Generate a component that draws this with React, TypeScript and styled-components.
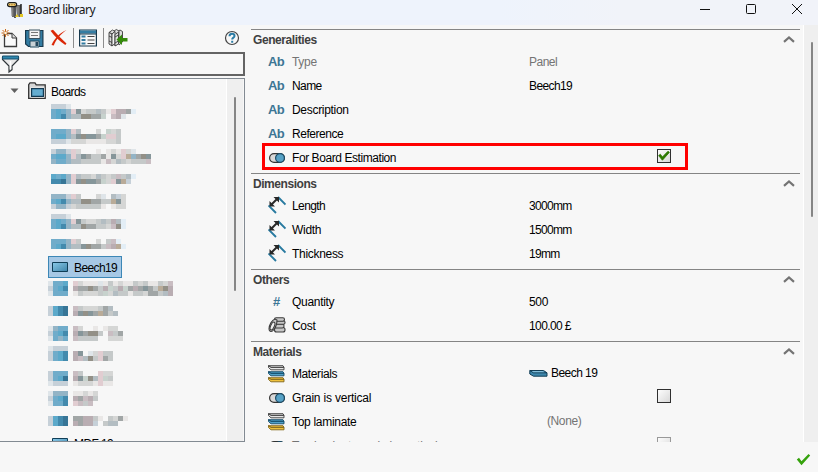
import React from "react";
import styled, { createGlobalStyle } from "styled-components";

const GlobalStyle = createGlobalStyle`
  * { box-sizing: border-box; }
  body { margin: 0; background: #f7f7f7; overflow: hidden; }
  svg { display: block; flex: none; }
`;

const Window = styled.div`
  display: flex;
  flex-direction: column;
  width: 818px;
  height: 472px;
  overflow: hidden;
  background: #f7f7f7;
  color: #000;
  font: 12px/24px "Liberation Sans", Arial, sans-serif;
  white-space: nowrap;
`;

const TitleBar = styled.header`
  display: flex;
  flex: none;
  height: 25px;
  padding: 1px 15px 0 7px;
  background: linear-gradient(90deg, #eef3fc 0 500px, #f1f3f9 620px);
`;

const Title = styled.h1`
  flex: 1;
  margin: 0 0 0 5px;
  font: 400 12px/18px "Noto Sans", "Open Sans", sans-serif;
  letter-spacing: -0.45px;
  color: #161616;
`;

const WindowButtons = styled.div`
  display: flex;
  gap: 34px;
  padding-top: 2px;
`;

const Content = styled.div`
  display: flex;
  flex: none;
  height: 417px;
`;

const Sidebar = styled.aside`
  display: flex;
  flex-direction: column;
  width: 245px;
  flex: none;
`;

const Toolbar = styled.div`
  display: flex;
  align-items: center;
  height: 27px;
  padding: 0 3px 1px 0;
`;

const ToolButton = styled.span<{ $gap?: number }>`
  margin-right: ${(p) => p.$gap ?? 4}px;
`;

const Separator = styled.span<{ $gap: number }>`
  width: 1px;
  height: 20px;
  margin-right: ${(p) => p.$gap}px;
  background: #8d8d8d;
`;

const Spacer = styled.span`
  flex: 1;
`;

const FilterBox = styled.div`
  height: 24px;
  border: 2px solid #646464;
  border-left: 0;
  padding: 0 0 0 1px;
  margin-bottom: 2px;
`;

const TreePanel = styled.div`
  display: flex;
  height: 364px;
  border: solid #828a92;
  border-width: 1px 1px 1px 0;
  overflow: hidden;
`;

const Tree = styled.div`
  flex: 1;
  padding-top: 1px;
`;

const TreeRoot = styled.div`
  display: flex;
  align-items: center;
  height: 22px;
  padding: 0 0 0 10px;
  line-height: 22px;
`;

const TreeText = styled.span`
  padding-top: 2px;
  letter-spacing: -0.6px;
`;

const TreeItem = styled.div`
  height: 22px;
  padding-left: 48px;
`;

const ItemBox = styled.div<{ $selected?: boolean }>`
  display: inline-flex;
  align-items: center;
  vertical-align: top;
  gap: 5px;
  width: 74px;
  height: 22px;
  padding: 0 0 0 3px;
  line-height: 22px;
  border: 1px solid ${(p) => (p.$selected ? "#3c87b6" : "transparent")};
  background: ${(p) => (p.$selected ? "#a6c8e5" : "transparent")};
`;

const Track = styled.div<{ $wide?: boolean }>`
  flex: none;
  width: ${(p) => (p.$wide ? 15 : 17)}px;
  margin-right: ${(p) => (p.$wide ? 0 : 1)}px;
  border-left: 1px solid #fff;
  background: #efefef;
  padding: ${(p) => (p.$wide ? "17px 0 0 7px" : "18px 0 0 7px")};
`;

const Thumb = styled.div<{ $length: number }>`
  width: 2px;
  height: ${(p) => p.$length}px;
  border-radius: 1px;
  background: #858585;
`;

const Properties = styled.main`
  flex: 1;
  padding: 4px 3px 0 6px;
  overflow: hidden;
`;

const Section = styled.section`
  border-top: 1px solid #858585;
  padding-bottom: 3px;
`;

const SectionHeader = styled.div`
  display: flex;
  justify-content: space-between;
  height: 20px;
  padding: 0 5px 0 2px;
`;

const SectionTitle = styled.h2<{ $tracking: number }>`
  margin: 0;
  font: bold 12px/21px "Liberation Sans", Arial, sans-serif;
  letter-spacing: ${(p) => p.$tracking}px;
  color: #404040;
`;

const ChevronBox = styled.span`
  padding-top: 6px;
`;

const Row = styled.div`
  display: flex;
  position: relative;
  height: 24px;
  padding-left: 17px;
`;

const RowIcon = styled.span<{ $raised?: boolean }>`
  display: flex;
  align-items: center;
  width: 18px;
  height: ${(p) => (p.$raised ? 22 : 24)}px;
  margin-right: 6px;
`;

const Label = styled.span<{ $muted?: boolean }>`
  width: 237px;
  color: ${(p) => (p.$muted ? "#747474" : "#000")};
`;

const Text = styled.span<{ $tracking?: number }>`
  letter-spacing: ${(p) => p.$tracking ?? -0.3}px;
`;

const Value = styled.span<{ $muted?: boolean; $indent?: number; $raised?: boolean }>`
  display: flex;
  align-items: center;
  gap: 3px;
  height: ${(p) => (p.$raised ? 22 : 24)}px;
  padding-left: ${(p) => p.$indent ?? 0}px;
  color: ${(p) => (p.$muted ? "#747474" : "#000")};
`;

const CheckBox = styled.span<{ $faded?: boolean }>`
  width: 14px;
  height: 14px;
  margin: 3px 0 0 128px;
  border: 1px solid ${(p) => (p.$faded ? "#999" : "#303030")};
  background: linear-gradient(135deg, #fdfdfd, #d8d8d8);
`;

const Highlight = styled.div`
  position: absolute;
  left: 11px;
  top: -3px;
  width: 426px;
  height: 27px;
  border: 3px solid #f00;
`;

const Prefix = styled.span<{ $hash?: boolean }>`
  width: 18px;
  padding-left: ${(p) => (p.$hash ? 5 : 0)}px;
  font-weight: bold;
  font-size: 13px;
  letter-spacing: -0.7px;
  color: #3d7695;
`;

const Footer = styled.footer`
  display: flex;
  justify-content: flex-end;
  height: 30px;
  padding: 11px 7px 0;
`;

/* Anonymised tree labels: mosaic cells of 5px, one palette letter per cell. */
const palette: Record<string, string> = {
  a: "#70acca", b: "#5ca9ca", c: "#438aad", d: "#377596", e: "#93b4c6",
  f: "#c6d0d8", g: "#dfe5e9", h: "#e1cdd1", i: "#b3bdc2", j: "#86969a",
  k: "#939087", l: "#a1a6a6", m: "#c5c9c9", n: "#d5d6d5", o: "#e9e7e6",
  p: "#c7d2cd", q: "#b9adb2", r: "#b9ab98", s: "#e3eef6", t: "#c9bdc2",
};

type Mosaic = { left: number; top: number; rows: string[] };

const mosaics: (Mosaic | null)[] = [
  { left: 3, top: 2, rows: ["fffg", "abaehjnmmimohqqls", "abceiikkllp tqg"] },
  { left: 3, top: 5, rows: ["aaaehi   n pnm", "abbeijkjjlphhm", "fffgnnnoooonnm"] },
  { left: 3, top: 3, rows: ["feefhn   o onohng", "abbehijlmmlojnhrelkj", "eaaeiimmmmotnimnmmmt"] },
  { left: 3, top: 6, rows: ["babehimmnimnmtmis", "ccdehjkjjlpnhjrf"] },
  { left: 3, top: 4, rows: ["eeefhm   ng ifn", "abceiikkllmmrjn", "feefnmmmmmo onn"] },
  { left: 3, top: 2, rows: ["fffg", "abaehjmnnmimqis", "abceiikllmmntks"] },
  { left: 3, top: 5, rows: ["aaaehm   n mts", "abceiijkllmtqrs"] },
  null,
  { left: 0, top: 3, rows: ["gaab hnooogomonoomnmoomnt", "fabc qllklmqpmqplqljlmrkq", "gaaa omnnnmpnimmommnllmiq"] },
  { left: 0, top: 6, rows: ["fbcd tmnnnmli", "fbcd qjkjlrlmi"] },
  { left: 0, top: 4, rows: ["geaa tn  o onn", "fabc qjlkkm tml", "gaea tmmmm  nnn"] },
  { left: 0, top: 2, rows: ["gfff", "fabc qj gnhmm", "fabc qtikmhlm"] },
  { left: 0, top: 5, rows: ["faaa tm   hnn", "fabd qjpkihpm", "gfff onnnohoo"] },
  { left: 0, top: 3, rows: ["geee oonon", "fabc qltqm", "gaac htmt"] },
  { left: 0, top: 6, rows: ["fbcd llqqmo mnlo", "fbcd qlqqf mii"] },
];

function MosaicLabel({ left, top, rows }: Mosaic) {
  return (
    <svg width="150" height="22" shapeRendering="crispEdges">
      {rows.map((row, y) =>
        [...row].map((cell, x) =>
          palette[cell] ? (
            <rect key={`${x}-${y}`} x={left + x * 5} y={top + y * 5} width="5" height="5" fill={palette[cell]} />
          ) : null
        )
      )}
    </svg>
  );
}

const AppIcon = () => (
  <svg width="16" height="18" viewBox="0 0 16 18">
    <path d="M4 5h3v11H5zM9 4h5v12h-4z" fill="#666" />
    <path d="M5 6v9M11 5v11" stroke="#999" />
    <path d="M8 5v12M14 3v13" stroke="#222" strokeWidth="1.5" />
    <rect x=".6" y="1.6" width="9" height="4" rx="2" fill="#f7df91" stroke="#1d1d1d" strokeWidth="1.3" />
    <path d="M2 3.7h7" stroke="#b67d20" strokeWidth="1.4" strokeDasharray="1.3 1" />
    <path d="M8 16l2-3 2 3zM13 13h3v3h-3z" fill="#e4c725" />
  </svg>
);

const NewIcon = () => (
  <svg width="19" height="20" viewBox="0 0 19 20">
    <path d="M4.500 5.500h7.500l4.500 4.500v8.500h-12z" fill="#fafafa" stroke="#3c3c3c" strokeWidth="1.300" />
    <path d="M12 5.500V10h4.500" fill="#ddd" stroke="#3c3c3c" />
    <path d="M5.500 1v8M1.500 5h8M2.500 2l6 6M8.500 2l-6 6" stroke="#ca681a" />
    <circle cx="5.500" cy="5" r="1.300" fill="#fff4d9" />
  </svg>
);

const SaveIcon = () => (
  <svg width="19" height="19" viewBox="0 0 19 19">
    <path d="M.6 1.500h17.300v16H3.500L.6 15z" fill="#337ca2" stroke="#17384c" strokeWidth="1.200" />
    <path d="M4 1h11v8.500H4z" fill="#f4f4f4" stroke="#3b5260" />
    <path d="M6 3.500h7M6 6.500h7" stroke="#777" />
    <path d="M5 12h9v6H5z" fill="#c9d1d5" stroke="#214b61" />
    <path d="M10.500 13h2.500v4h-2.500z" fill="#24465b" />
  </svg>
);

const DeleteIcon = () => (
  <svg width="18" height="18" viewBox="0 0 18 18">
    <path d="M.5 1.800L3 .8c3.500 4 8 8.600 13.500 13.700l-1.200 1.400C9.500 12.500 5 8 .5 1.800z" fill="#db2807" />
    <path d="M16.500 1.100C11 5 6 10.500 3.800 16.500L1.500 16C4.500 9.500 9.500 4.200 16.500 1.100z" fill="#db2807" />
  </svg>
);

const ListIcon = () => (
  <svg width="18" height="18" viewBox="0 0 18 18">
    <path d="M.6 1h16.800v16H.6z" fill="#f8f8f8" stroke="#17384c" strokeWidth="1.200" />
    <path d="M1 1.500h16v3H1z" fill="#347da3" />
    <path d="M2.500 6.500h4v2h-4zM2.500 10h4v2h-4zM2.500 13.500h4v2h-4z" fill="#327ba0" />
    <path d="M8.500 7.500h7M8.500 11h7M8.500 14.500h7" stroke="#444" />
    <path d="M1 5h16" stroke="#17384c" />
  </svg>
);

const ImportIcon = () => (
  <svg width="20" height="20" viewBox="0 0 20 20">
    <g fill="#dcdcdc" stroke="#3a3a3a" strokeWidth=".9">
      <path d="M8.500 4.500L12 2l2.500 1.500V14L11 17z" />
      <path d="M4.800 4L8.300 1.500 11 3v12l-3.500 2.500-2.700-1.500z" />
      <path d="M1 4.500L4.500 2 7 3.500 4 6z" />
      <path d="M1 4.500L4 6v12l-3-2z" />
      <path d="M4 6l3-2.500v12L4 18z" fill="#f4f4f4" />
      <path d="M7 6.500L10.500 4v12L7 18z" />
      <path d="M1 8l3 1.500M1 13l3 1.500M7 9l3.500-2M7 15l3.500-2" fill="none" />
    </g>
    <path d="M8.500 11.500l5.500-5V10h5.500v3.500H14V17z" fill="#358b0a" />
  </svg>
);

const HelpIcon = () => (
  <svg width="16" height="16" viewBox="0 0 16 16">
    <circle cx="8" cy="8" r="6.500" fill="#f8f8f8" stroke="#444" strokeWidth="1.200" />
    <path d="M5.500 6.200c0-3.500 5-3.200 5-.3 0 1.800-2.300 1.700-2.300 3.600M8.200 10.700v2" fill="none" stroke="#2b7ca5" strokeWidth="2" />
  </svg>
);

const FilterIcon = () => (
  <svg width="19" height="20" viewBox="0 0 19 20">
    <path d="M1.500 3.500v2L8 12v6l3-2.200V12l6.500-6.500v-2z" fill="#e8e8e8" stroke="#2e3438" strokeWidth="1.200" />
    <path d="M1.500 2h16v3h-16z" fill="#2d86ad" stroke="#184e6a" />
    <path d="M9.500 7v8" stroke="#fff" strokeWidth="1.500" />
  </svg>
);

const FolderIcon = () => (
  <svg width="18" height="18" viewBox="0 0 18 18">
    <path d="M.7 16.300V2.600L2 .9h5l1.200 2h9v13.400z" fill="#d6d6d6" stroke="#313131" strokeWidth="1.300" />
    <path d="M2.500 5.500h14v10h-14z" fill="#f1f1f1" />
    <path d="M3.600 6.600h11.800v7.800H3.600z" fill="#65add0" stroke="#123b54" strokeWidth="1.200" />
  </svg>
);

const BoardIcon = () => (
  <svg width="17" height="12" viewBox="0 0 17 12">
    <defs>
      <linearGradient id="board" x1="0" y1="0" x2="1" y2="1">
        <stop stopColor="#8acae9" /><stop offset="1" stopColor="#3d83a9" />
      </linearGradient>
    </defs>
    <path d="M.5 1.500h15v9H.5z" fill="url(#board)" stroke="#103e57" />
  </svg>
);

const ToggleIcon = () => (
  <svg width="18" height="12" viewBox="0 0 18 12">
    <rect x="1.600" y="1.600" width="14.800" height="8.800" rx="4.400" fill="#d9d9d9" stroke="#333" strokeWidth="1.200" />
    <circle cx="12" cy="6" r="4.400" fill="#57a2c6" stroke="#1c4c67" strokeWidth="1.200" />
  </svg>
);

const MeasureIcon = () => (
  <svg width="18" height="18" viewBox="0.500 0.500 18 18">
    <path d="M1 10l7.500 7.500M10.500 1.500L18 9" stroke="#287aa0" strokeWidth="1.900" />
    <path d="M3.500 9.500L10 3" stroke="#282828" strokeWidth="2" />
    <path d="M2 11V5.500L7.500 11zM11.500 1.500V7L6 1.500z" fill="#282828" />
  </svg>
);

const CoinsIcon = () => (
  <svg width="18" height="16" viewBox="0 0 18 16">
    <g fill="#c7c7c7" stroke="#3c3c3c" strokeWidth="1.100">
      <rect x="6.500" y="10.500" width="10.500" height="4.500" rx="2" />
      <rect x="6.500" y="7" width="9.500" height="4" rx="1.800" />
      <rect x="7.500" y="3.800" width="9.500" height="3.500" rx="1.500" />
      <rect x="6.500" y=".8" width="10" height="3.400" rx="1.600" />
      <path d="M7 2C4 3 1 8 1 12c0 3 3 3 4.500 1C8 10 9 5 9 3z" />
      <ellipse cx="4.500" cy="9" rx="1.800" ry="4.200" transform="rotate(24 4.500 9)" fill="#eee" />
    </g>
  </svg>
);

const slabs = [
  { face: "#e6e6e6", edge: "#3a3a3a", y: 0 },
  { face: "#4fa0c8", edge: "#124a68", y: 6 },
  { face: "#f0c23c", edge: "#80641a", y: 12 },
];

const MaterialsIcon = () => (
  <svg width="18" height="18" viewBox="0 0 18 18">
    {slabs.map(({ face, edge, y }) => (
      <g key={y} transform={`translate(0 ${y})`} stroke={edge} strokeWidth=".9">
        <path d="M.5.700h14.500l1 1.700H3z" fill={face} />
        <path d="M.5.700L3 2.400h13v2.400H3L.5 2.500z" fill={face} />
      </g>
    ))}
  </svg>
);

const PlankIcon = () => (
  <svg width="19" height="9" viewBox="0 0 19 9">
    <path d="M.8 1.500h13.700l3.500 2.300v3.400H4.500L.8 5z" fill="#3d87ac" stroke="#123d55" />
    <path d="M.8 1.500l3.700 2.300H18" fill="none" stroke="#123d55" />
    <path d="M2.500 2h11l2 1.300h-11z" fill="#83bfdc" />
  </svg>
);

const Chevron = () => (
  <svg width="12" height="7" viewBox="0 0 12 7">
    <path d="M1 5.800l5-4.300 5 4.300" fill="none" stroke="#747474" strokeWidth="2.200" />
  </svg>
);

const Tick = ({ large }: { large?: boolean }) => (
  <svg width={large ? 15 : 12} height={large ? 14 : 12} viewBox="0 0 15 14">
    <path d="M.8 6.500L3 4.800l2.500 3.500L12.500 1l1.700 1.500L5.500 12.300z" fill={large ? "#35a20c" : "#2c7800"} stroke={large ? "none" : "#2c7800"} />
  </svg>
);

type Field = {
  icon: "text" | "toggle" | "measure" | "hash" | "coins" | "materials";
  label: string;
  tracking?: number;
  value?: string;
  valueTracking?: number;
  check?: "on" | "off" | "faded";
  muted?: boolean;
  mutedValue?: boolean;
  plank?: boolean;
  highlighted?: boolean;
};

const sections: { title: string; tracking: number; fields: Field[] }[] = [
  {
    title: "Generalities",
    tracking: -0.42,
    fields: [
      { icon: "text", label: "Type", value: "Panel", valueTracking: -0.5, muted: true },
      { icon: "text", label: "Name", tracking: -0.6, value: "Beech19", valueTracking: -0.6 },
      { icon: "text", label: "Description" },
      { icon: "text", label: "Reference", tracking: -0.45 },
      { icon: "toggle", label: "For Board Estimation", tracking: -0.43, check: "on", highlighted: true },
    ],
  },
  {
    title: "Dimensions",
    tracking: -0.45,
    fields: [
      { icon: "measure", label: "Length", tracking: -0.6, value: "3000mm", valueTracking: -0.7 },
      { icon: "measure", label: "Width", value: "1500mm", valueTracking: -0.7 },
      { icon: "measure", label: "Thickness", value: "19mm", valueTracking: -0.7 },
    ],
  },
  {
    title: "Others",
    tracking: -0.4,
    fields: [
      { icon: "hash", label: "Quantity", value: "500" },
      { icon: "coins", label: "Cost", value: "100.00 £", valueTracking: -0.6 },
    ],
  },
  {
    title: "Materials",
    tracking: -0.4,
    fields: [
      { icon: "materials", label: "Materials", tracking: -0.4, value: "Beech 19", valueTracking: -0.55, plank: true },
      { icon: "toggle", label: "Grain is vertical", tracking: -0.2, check: "off" },
      { icon: "materials", label: "Top laminate", value: "(None)", mutedValue: true, valueTracking: -0.4 },
      { icon: "toggle", label: "Top laminate grain is vertical", tracking: -0.2, check: "faded", muted: true },
    ],
  },
];

function FieldIcon({ icon }: { icon: Field["icon"] }) {
  switch (icon) {
    case "text": return <Prefix>Ab</Prefix>;
    case "hash": return <Prefix $hash>#</Prefix>;
    case "toggle": return <ToggleIcon />;
    case "measure": return <MeasureIcon />;
    case "coins": return <CoinsIcon />;
    case "materials": return <MaterialsIcon />;
  }
}

function FieldRow({ field }: { field: Field }) {
  return (
    <Row>
      <RowIcon $raised={field.icon === "measure" || field.icon === "coins"}>
        <FieldIcon icon={field.icon} />
      </RowIcon>
      <Label $muted={field.muted}><Text $tracking={field.tracking}>{field.label}</Text></Label>
      {field.value && (
        <Value
          $muted={field.muted || field.mutedValue}
          $indent={field.mutedValue ? 18 : 0}
          $raised={field.plank || field.mutedValue}
        >
          {field.plank && <PlankIcon />}
          <Text $tracking={field.valueTracking}>{field.value}</Text>
        </Value>
      )}
      {field.check && <CheckBox $faded={field.check === "faded"}>{field.check === "on" && <Tick />}</CheckBox>}
      {field.highlighted && <Highlight />}
    </Row>
  );
}

export default function App() {
  return (
    <Window>
      <GlobalStyle />
      <TitleBar>
        <AppIcon />
        <Title>Board library</Title>
        <WindowButtons>
          <svg width="12" height="12"><path d="M1 6.500h10" stroke="#111" /></svg>
          <svg width="12" height="12"><rect x="1.500" y="1.500" width="9" height="9" rx="1" fill="none" stroke="#111" /></svg>
          <svg width="12" height="12"><path d="M1 1l10 10M11 1L1 11" stroke="#111" /></svg>
        </WindowButtons>
      </TitleBar>
      <Content>
        <Sidebar>
          <Toolbar>
            <ToolButton $gap={6}><NewIcon /></ToolButton>
            <ToolButton $gap={6}><SaveIcon /></ToolButton>
            <ToolButton $gap={5}><DeleteIcon /></ToolButton>
            <Separator $gap={5} />
            <ToolButton $gap={6}><ListIcon /></ToolButton>
            <Separator $gap={4} />
            <ToolButton $gap={0}><ImportIcon /></ToolButton>
            <Spacer />
            <ToolButton $gap={2}><HelpIcon /></ToolButton>
          </Toolbar>
          <FilterBox><FilterIcon /></FilterBox>
          <TreePanel>
            <Tree>
              <TreeRoot>
                <ToolButton $gap={9}>
                  <svg width="9" height="6"><path d="M.5.500h8l-4 4.500z" fill="#606060" /></svg>
                </ToolButton>
                <ToolButton $gap={5}><FolderIcon /></ToolButton>
                <TreeText>Boards</TreeText>
              </TreeRoot>
              {mosaics.map((mosaic, i) => (
                <TreeItem key={i}>
                  {mosaic ? (
                    <MosaicLabel {...mosaic} />
                  ) : (
                    <ItemBox $selected><BoardIcon /><TreeText>Beech19</TreeText></ItemBox>
                  )}
                </TreeItem>
              ))}
              <TreeItem>
                <ItemBox><BoardIcon /><TreeText>MDF 19</TreeText></ItemBox>
              </TreeItem>
            </Tree>
            <Track><Thumb $length={194} /></Track>
          </TreePanel>
        </Sidebar>
        <Properties>
          {sections.map((section) => (
            <Section key={section.title}>
              <SectionHeader>
                <SectionTitle $tracking={section.tracking}>{section.title}</SectionTitle>
                <ChevronBox><Chevron /></ChevronBox>
              </SectionHeader>
              {section.fields.map((field) => <FieldRow key={field.label} field={field} />)}
            </Section>
          ))}
        </Properties>
        <Track $wide><Thumb $length={175} /></Track>
      </Content>
      <Footer><Tick large /></Footer>
    </Window>
  );
}
